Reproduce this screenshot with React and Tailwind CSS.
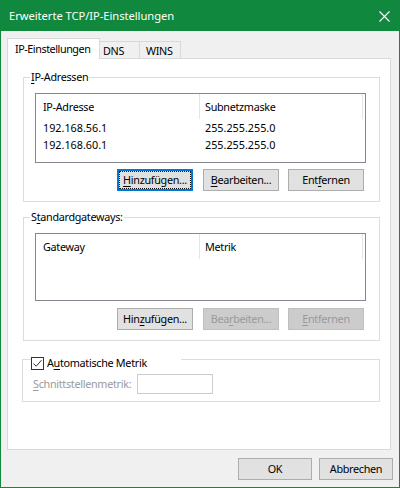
import React from "react";

function U({ children }) {
  return <span className="underline underline-offset-[2px] decoration-[1px]">{children}</span>;
}

function Btn({ children, className = "", focused = false, disabled = false }) {
  if (focused) {
    return (
      <div className={"h-[22px] flex border-2 border-[#0078d7] bg-[#e1e1e1] whitespace-nowrap " + className}>
        <div className="flex-1 flex items-center justify-center border border-dotted border-[#111] leading-[16px]">
          {children}
        </div>
      </div>
    );
  }
  return (
    <div
      className={
        "h-[22px] flex items-center justify-center border leading-[16px] whitespace-nowrap " +
        (disabled
          ? "bg-[#cccccc] border-[#bfbfbf] text-[#9a9a9a] "
          : "bg-[#e1e1e1] border-[#adadad] text-black ") +
        className
      }
    >
      {children}
    </div>
  );
}

function ListView({ heightClass, col1, col2, rows }) {
  return (
    <div className={"ml-[11px] w-[331px] border border-[#828790] bg-white flex flex-col " + heightClass}>
      <div className="h-[25px] flex items-center leading-[16px]">
        <div className="w-[164px] h-full flex items-center pl-[7px] border-r border-[#e5e5e5]">{col1}</div>
        <div className="w-[163px] h-full flex items-center pl-[5px] border-r border-[#e5e5e5]">{col2}</div>
      </div>
      {rows.map((r, i) => (
        <div key={i} className="h-[17px] flex items-center leading-[16px] tracking-normal">
          <div className="w-[164px] pl-[7px]">{r[0]}</div>
          <div className="pl-[5px]">{r[1]}</div>
        </div>
      ))}
    </div>
  );
}

export default function App() {
  return (
    <div className="w-[400px] h-[488px] flex flex-col bg-[#10893e] px-px pb-px font-['Noto_Sans',sans-serif] text-[10.8px] tracking-[-0.3px] text-black select-none">
      {/* Title bar */}
      <div className="h-[31px] shrink-0 flex items-center justify-between pl-[8px] pr-[9px] text-white text-[11.2px] tracking-[-0.05px]">
        <span className="leading-[16px] whitespace-nowrap">Erweiterte TCP/IP-Einstellungen</span>
        <svg width="11" height="11" viewBox="0 0 11 11" className="mt-[1px]">
          <path d="M0.5 0.5 L10.5 10.5 M10.5 0.5 L0.5 10.5" stroke="#ffffff" strokeWidth="1.1" fill="none" />
        </svg>
      </div>

      {/* Body */}
      <div className="flex-1 bg-[#f0f0f0] flex flex-col pl-[6px] pt-[7px]">
        {/* Tabs */}
        <div className="h-[20px] flex items-end">
          <div className="relative z-10 h-[21px] mb-[-1px] w-[93px] bg-white border-x border-t border-[#d9d9d9] flex items-center pl-[7px] leading-[16px] whitespace-nowrap tracking-[-0.45px]">
            IP-Einstellungen
          </div>
          <div className="h-[17px] w-[40px] bg-[#f0f0f0] border-t border-r border-[#d9d9d9] flex items-center pl-[3px] pt-[2px] leading-[16px]">
            DNS
          </div>
          <div className="h-[17px] w-[41px] bg-[#f0f0f0] border-t border-r border-[#d9d9d9] flex items-center pl-[6px] pt-[2px] leading-[16px]">
            WINS
          </div>
        </div>

        {/* Panel */}
        <div className="w-[384px] h-[392px] border border-[#d9d9d9] bg-white flex flex-col">
          {/* IP-Adressen */}
          <fieldset className="mt-[10px] ml-[15px] w-[357px] border border-[#dcdcdc] pb-[10px]">
            <legend className="ml-[6px] px-[1px] leading-[16px] h-[16px]">
              <U>I</U>P-Adressen
            </legend>
            <div className="mt-[8px]">
              <ListView
                heightClass="h-[70px]"
                col1="IP-Adresse"
                col2="Subnetzmaske"
                rows={[
                  ["192.168.56.1", "255.255.255.0"],
                  ["192.168.60.1", "255.255.255.0"],
                ]}
              />
            </div>
            <div className="mt-[6px] flex ml-[93px]">
              <Btn focused className="w-[76px]">
                <U>H</U>inzufügen...
              </Btn>
              <Btn className="w-[76px] ml-[10px]">
                <U>B</U>earbeiten...
              </Btn>
              <Btn className="w-[76px] ml-[9px]">
                Ent<U>f</U>ernen
              </Btn>
            </div>
          </fieldset>

          {/* Standardgateways */}
          <fieldset className="mt-[7px] ml-[15px] w-[357px] border border-[#dcdcdc] pb-[10px]">
            <legend className="ml-[6px] px-[1px] leading-[16px] h-[16px]">
              S<U>t</U>andardgateways:
            </legend>
            <div className="mt-[8px]">
              <ListView heightClass="h-[68px]" col1="Gateway" col2="Metrik" rows={[]} />
            </div>
            <div className="mt-[7px] flex ml-[93px]">
              <Btn className="w-[76px]">
                Hin<U>z</U>ufügen...
              </Btn>
              <Btn disabled className="w-[76px] ml-[10px]">
                Bea<U>r</U>beiten...
              </Btn>
              <Btn disabled className="w-[76px] ml-[9px]">
                <U>E</U>ntfernen
              </Btn>
            </div>
          </fieldset>

          {/* Automatische Metrik */}
          <fieldset className="mt-[10px] ml-[14px] w-[358px] border border-[#dcdcdc] pb-[7px]">
            <legend className="ml-[8px] w-[150px] h-[16px] leading-[16px] bg-white">
              <div className="relative top-[4px] flex items-center whitespace-nowrap">
                <div className="w-[13px] h-[13px] shrink-0 border border-[#333333] bg-white flex items-center justify-center">
                  <svg width="11" height="11" viewBox="0 0 11 11">
                    <path d="M1.5 5.5 L4.2 8.2 L9.5 2.2" stroke="#333333" strokeWidth="1" fill="none" />
                  </svg>
                </div>
                <span className="ml-[3px]">
                  A<U>u</U>tomatische Metrik
                </span>
              </div>
            </legend>
            <div className="mt-[7px] flex items-center">
              <span className="ml-[10px] w-[104px] shrink-0 whitespace-nowrap text-[#9a9a9a] leading-[16px]">
                <U>S</U>chnittstellenmetrik:
              </span>
              <div className="w-[76px] h-[20px] shrink-0 border border-[#cccccc] bg-white" />
            </div>
          </fieldset>
        </div>

        {/* OK / Abbrechen */}
        <div className="mt-[8px] flex justify-end pr-[6px]">
          <Btn className="w-[74px]">OK</Btn>
          <Btn className="w-[74px] ml-[7px]">Abbrechen</Btn>
        </div>
      </div>
    </div>
  );
}
